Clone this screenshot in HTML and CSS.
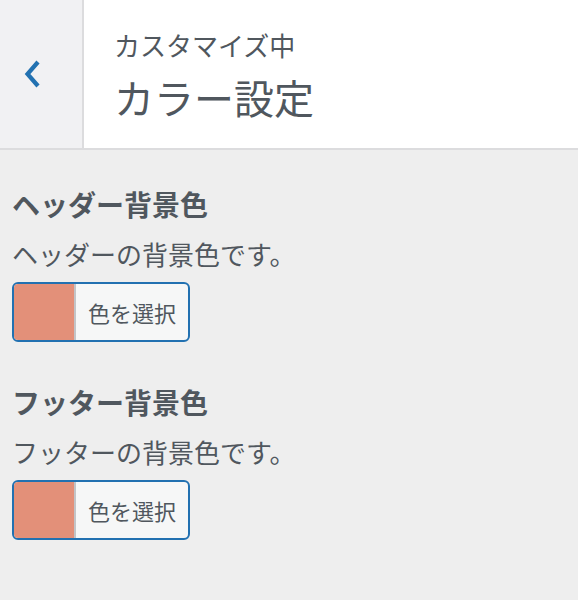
FILE: index.html
```html
<!DOCTYPE html>
<html lang="ja">
<head>
<meta charset="utf-8">
<link rel="stylesheet" href="styles.css">
</head>
<body>
<div class="panel">
  <header class="head">
    <div class="back">
      <svg class="chev" width="18" height="30" viewBox="0 0 18 30"><path d="M14 3 L3.5 15 L14 27" fill="none" stroke="#2271b1" stroke-width="4.2" stroke-linecap="butt" stroke-linejoin="miter"/></svg>
    </div>
    <div class="titles">
      <div class="sub">カスタマイズ中</div>
      <div class="title">カラー設定</div>
    </div>
  </header>
  <main class="body">
    <section class="control">
      <h2 class="label">ヘッダー背景色</h2>
      <p class="desc">ヘッダーの背景色です。</p>
      <button class="picker"><span class="swatch"></span><span class="btn-text">色を選択</span></button>
    </section>
    <section class="control">
      <h2 class="label">フッター背景色</h2>
      <p class="desc">フッターの背景色です。</p>
      <button class="picker"><span class="swatch"></span><span class="btn-text">色を選択</span></button>
    </section>
  </main>
</div>
</body>
</html>
```
FILE: styles.css
```css
* { box-sizing: border-box; }
html, body { margin: 0; padding: 0; }
body {
  width: 578px;
  height: 600px;
  background: #eeeeee;
  font-family: "Noto Sans CJK JP", "Noto Sans", sans-serif;
  color: #50575e;
  overflow: hidden;
}
.head {
  display: flex;
  height: 150px;
  background: #ffffff;
  border-bottom: 2px solid #dcdcde;
}
.back {
  width: 84px;
  flex: none;
  background: #f1f1f3;
  border-right: 2px solid #dcdcde;
  display: flex;
  align-items: center;
  padding-left: 24px;
}
.chev { display: block; }
.titles {
  padding: 27px 0 0 30px;
}
.sub {
  font-size: 26px;
  line-height: 36px;
  color: #50575e;
}
.title {
  margin-top: 8px;
  font-size: 40px;
  line-height: 52px;
  color: #50575e;
}
.body {
  padding: 34px 12px 0 12px;
}
.control { margin-bottom: 40px; }
.label {
  margin: 0;
  font-size: 28px;
  line-height: 40px;
  font-weight: 700;
  color: #50575e;
}
.desc {
  margin: 12px 0 10px 0;
  font-size: 26px;
  line-height: 36px;
  color: #50575e;
}
.picker {
  display: flex;
  align-items: stretch;
  width: 178px;
  height: 60px;
  padding: 0;
  border: 2px solid #2271b1;
  border-radius: 6px;
  background: #f6f7f7;
  overflow: hidden;
  font-family: inherit;
  cursor: pointer;
}
.swatch {
  width: 62px;
  flex: none;
  background: #e39079;
  border-right: 2px solid #c3c4c7;
}
.btn-text {
  flex: 1;
  display: flex;
  align-items: center;
  justify-content: center;
  font-size: 22px;
  color: #50575e;
}
```
